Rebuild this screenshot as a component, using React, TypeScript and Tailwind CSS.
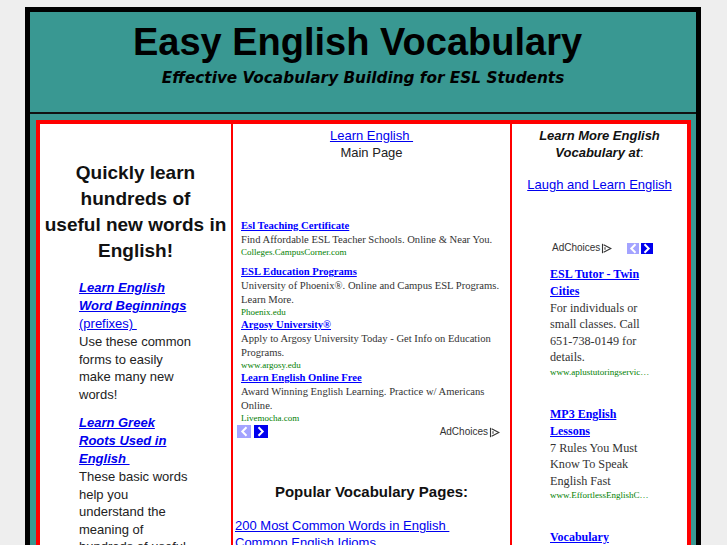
import React from "react";

function Chevron({ dir, light, w = 14, h = 13 }: { dir: "l" | "r"; light: boolean; w?: number; h?: number }) {
  const cx = w / 2;
  const cy = h / 2;
  const pts =
    dir === "l"
      ? `${cx + 1.8},${cy - 3.5} ${cx - 1.7},${cy} ${cx + 1.8},${cy + 3.5}`
      : `${cx - 1.8},${cy - 3.5} ${cx + 1.7},${cy} ${cx - 1.8},${cy + 3.5}`;
  return (
    <svg width={w} height={h} viewBox={`0 0 ${w} ${h}`} className="block">
      <rect width={w} height={h} fill={light ? "#a3a3ff" : "#0000ee"} />
      <polyline points={pts} fill="none" stroke="#ffffff" strokeWidth="2" strokeLinecap="square" />
    </svg>
  );
}

function AdChoices() {
  return (
    <span className="inline-flex items-center gap-[1px] font-['Liberation_Sans',Arial,sans-serif] text-[10px] leading-[12px] text-[#333]">
      <span>AdChoices</span>
      <svg width="11" height="11" viewBox="0 0 11 11" className="block">
        <path d="M1.5 0.8V10.2" stroke="#333" strokeWidth="1.1" fill="none" />
        <path d="M2.6 1.8L9.8 5.5L2.6 9.2" stroke="#333" strokeWidth="1.1" fill="none" strokeLinejoin="miter" />
        <path d="M4 4.2V6.8" stroke="#333" strokeWidth="1" fill="none" />
      </svg>
    </span>
  );
}

const midAds = [
  {
    title: "Esl Teaching Certificate",
    desc: ["Find Affordable ESL Teacher Schools. Online & Near You."],
    url: "Colleges.CampusCorner.com",
    extra: true,
  },
  {
    title: "ESL Education Programs",
    desc: ["University of Phoenix®. Online and Campus ESL Programs.", "Learn More."],
    url: "Phoenix.edu",
    extra: false,
  },
  {
    title: "Argosy University®",
    desc: ["Apply to Argosy University Today - Get Info on Education", "Programs."],
    url: "www.argosy.edu",
    extra: false,
  },
  {
    title: "Learn English Online Free",
    desc: ["Award Winning English Learning. Practice w/ Americans", "Online."],
    url: "Livemocha.com",
    extra: false,
  },
];

const rightAds = [
  {
    title: ["ESL Tutor - Twin", "Cities"],
    desc: ["For individuals or", "small classes. Call", "651-738-0149 for", "details."],
    url: "www.aplustutoringservic…",
  },
  {
    title: ["MP3 English", "Lessons"],
    desc: ["7 Rules You Must", "Know To Speak", "English Fast"],
    url: "www.EffortlessEnglishC…",
  },
  {
    title: ["Vocabulary", "Builder"],
    desc: ["Learn new words", "every day with", "free lessons."],
    url: "www.vocabulary.com",
  },
];

export default function App() {
  return (
    <div className="h-screen overflow-hidden bg-[#eeeeee] pl-[25px] pt-[7px] font-['Liberation_Sans',Arial,sans-serif]">
      <div className="w-[676px] border-[5px] border-black bg-[#399892]">
        <header className="h-[102px] border-b-2 border-[#111111] text-center">
          <h1 className="pr-[11px] pt-[8px] text-[38px] font-bold leading-[44px] text-black">
            Easy English Vocabulary
          </h1>
          <p className="mt-[5px] font-['DejaVu_Sans',Verdana,sans-serif] text-[15.3px] font-bold italic leading-[18px] text-black">
            Effective Vocabulary Building for ESL Students
          </p>
        </header>
        <div className="pl-[6px] pt-[6px]">
          <div className="flex h-[600px] w-[655px] border-4 border-[#ff0000] bg-white">
            {/* Left column */}
            <div className="w-[193px] shrink-0 border-r-2 border-[#ff0000] text-[#222222]">
              <h2 className="pt-[36px] text-center text-[19px] font-bold leading-[26px] text-[#111111]">
                Quickly learn
                <br />
                hundreds of
                <br />
                useful new words in
                <br />
                English!
              </h2>
              <div className="ml-[39px] mt-[15px] whitespace-nowrap text-[13px]">
                <p className="leading-[18px]">
                  <a href="#" className="text-[#0000ee] underline">
                    <b>
                      <i>
                        Learn English
                        <br />
                        Word Beginnings
                      </i>
                    </b>
                    <br />
                    (prefixes)&nbsp;
                  </a>
                </p>
                <p className="leading-[17.5px]">
                  Use these common
                  <br />
                  forms to easily
                  <br />
                  make many new
                  <br />
                  words!
                </p>
                <p className="mt-[11px] leading-[18px]">
                  <a href="#" className="text-[#0000ee] underline">
                    <b>
                      <i>
                        Learn Greek
                        <br />
                        Roots Used in
                        <br />
                        English&nbsp;
                      </i>
                    </b>
                  </a>
                </p>
                <p className="leading-[17.5px]">
                  These basic words
                  <br />
                  help you
                  <br />
                  understand the
                  <br />
                  meaning of
                  <br />
                  hundreds of useful
                  <br />
                  English words.
                </p>
              </div>
            </div>

            {/* Middle column */}
            <div className="w-[279px] shrink-0 border-r-2 border-[#ff0000] text-[13px]">
              <div className="pt-[2.5px] text-center leading-[17px]">
                <a href="#" className="text-[#0000ee] underline">
                  Learn English&nbsp;
                </a>
                <br />
                <span className="text-[#222222]">Main Page</span>
              </div>
              <div className="ml-[2px] mt-[58.5px] w-[270px]">
                <div className="flex flex-col gap-[1px] pl-[6px] font-['Liberation_Serif','Times_New_Roman',serif]">
                  {midAds.map((ad) => (
                    <div key={ad.title} className={ad.extra ? "mb-[7px]" : ""}>
                      <a href="#" className="block text-[10.6px] font-bold leading-[14px] text-[#0000ff] underline">
                        {ad.title}
                      </a>
                      {ad.desc.map((d) => (
                        <div key={d} className="whitespace-nowrap text-[10.6px] leading-[14px] text-[#333333]">
                          {d}
                        </div>
                      ))}
                      <div className="text-[9px] leading-[10px] text-[#008000]">{ad.url}</div>
                    </div>
                  ))}
                </div>
                <div className="mt-[1px] flex h-[14px] items-center pl-[2px] pr-[5px]">
                  <Chevron dir="l" light />
                  <span className="ml-[3px]">
                    <Chevron dir="r" light={false} />
                  </span>
                  <span className="ml-auto">
                    <AdChoices />
                  </span>
                </div>
              </div>
              <h3 className="mt-[45px] text-center text-[15px] font-bold leading-[18px] text-[#111111]">
                Popular Vocabulary Pages:
              </h3>
              <div className="mt-[15.5px] pl-[2px] leading-[17px]">
                <a href="#" className="text-[#0000ee] underline">
                  200 Most Common Words in English&nbsp;
                </a>
                <br />
                <a href="#" className="text-[#0000ee] underline">
                  Common English Idioms
                </a>
              </div>
            </div>

            {/* Right column */}
            <div className="flex-1 text-[13px]">
              <div className="pt-[2.5px] text-center leading-[17px] text-[#111111]">
                <b>
                  <i>
                    Learn More English
                    <br />
                    Vocabulary at
                  </i>
                </b>
                :
              </div>
              <div className="mt-[15px] text-center leading-[17px]">
                <a href="#" className="text-[#0000ee] underline">
                  Laugh and Learn English
                </a>
              </div>
              <div className="ml-[28px] mt-[49.5px] w-[120px]">
                <div className="flex h-[12px] items-center pl-[12px]">
                  <AdChoices />
                  <span className="ml-[15px]">
                    <Chevron dir="l" light w={12} h={11} />
                  </span>
                  <span className="ml-[2px]">
                    <Chevron dir="r" light={false} w={12} h={11} />
                  </span>
                </div>
                <div className="mt-[11.5px] flex flex-col gap-[28px] pl-[10px] font-['Liberation_Serif','Times_New_Roman',serif]">
                  {rightAds.map((ad) => (
                    <div key={ad.url}>
                      <a href="#" className="block whitespace-nowrap text-[12px] font-bold leading-[17px] text-[#0000ff]">
                        {ad.title.map((t) => (
                          <span key={t} className="block">
                            <span className="underline">{t}</span>
                          </span>
                        ))}
                      </a>
                      {ad.desc.map((d) => (
                        <div key={d} className="whitespace-nowrap text-[12.2px] leading-[16.5px] text-[#333333]">
                          {d}
                        </div>
                      ))}
                      <div className="whitespace-nowrap text-[9px] leading-[12px] text-[#008000]">{ad.url}</div>
                    </div>
                  ))}
                </div>
              </div>
            </div>
          </div>
        </div>
      </div>
    </div>
  );
}
